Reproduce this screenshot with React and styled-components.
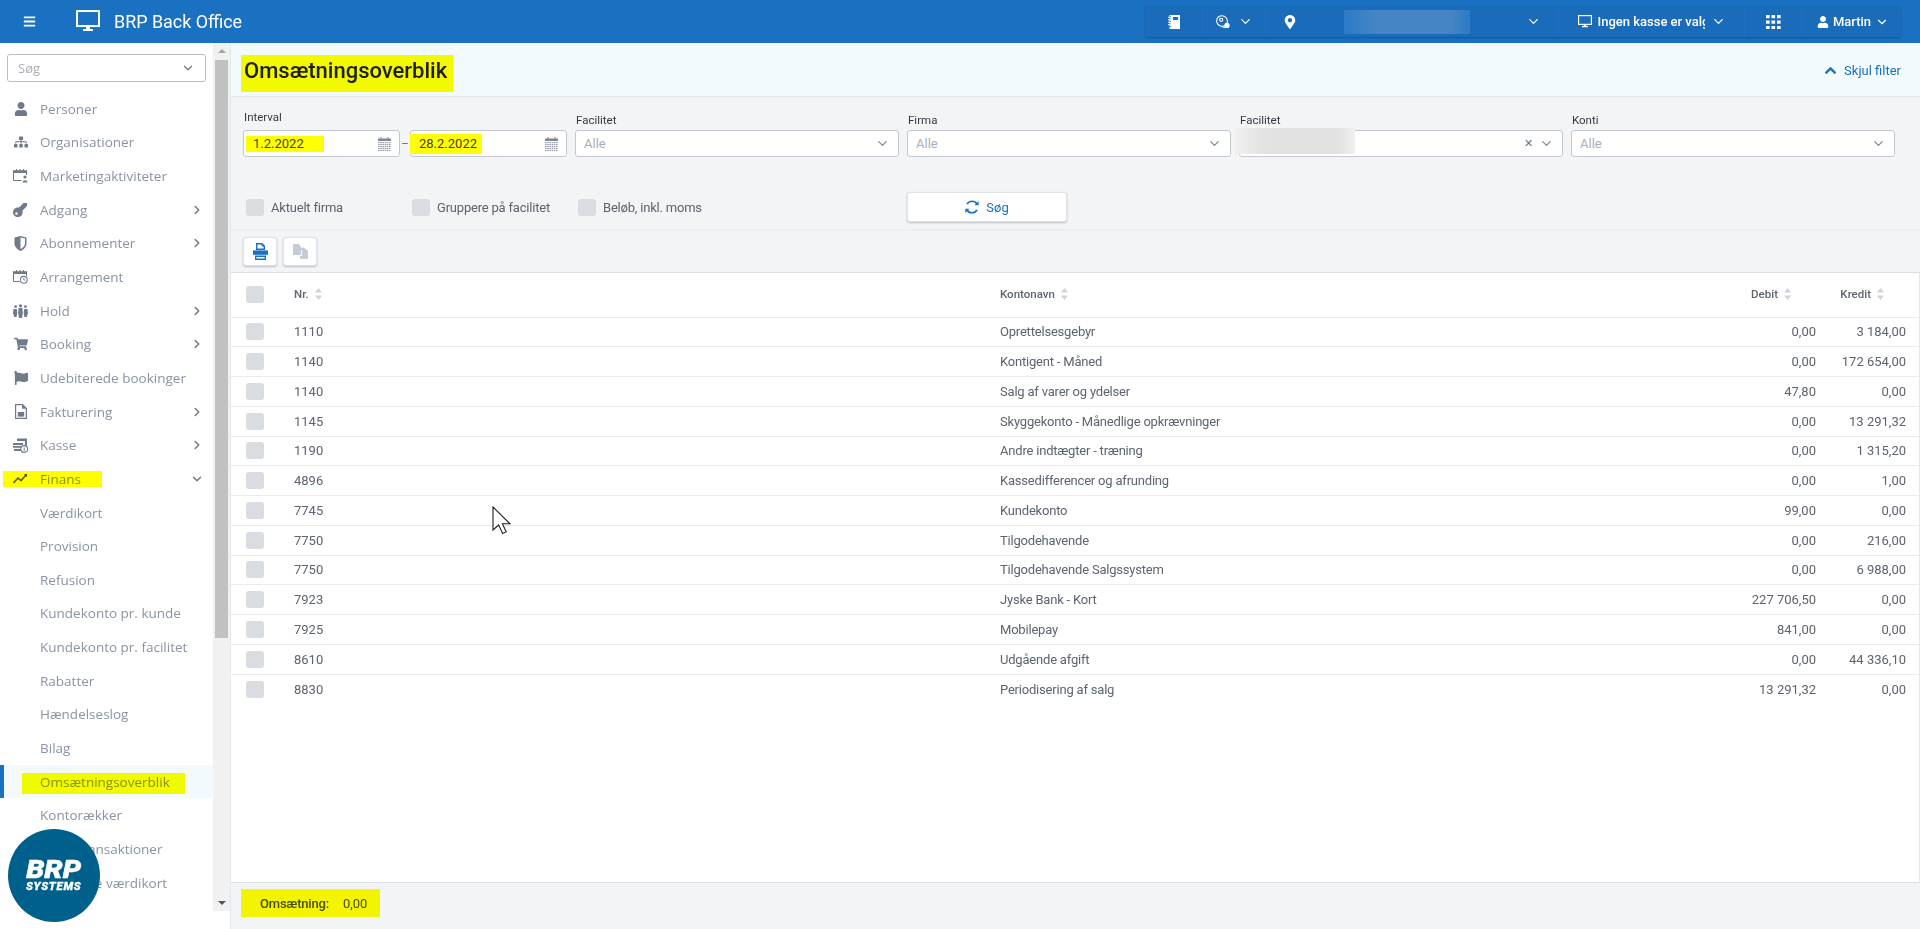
import React from "react";
import styled, { createGlobalStyle } from "styled-components";
import {
  FaUser,
  FaSitemap,
  FaKey,
  FaShoppingCart,
  FaFlag,
  FaMapMarkerAlt,
  FaBars,
} from "react-icons/fa";
import { FiChevronDown, FiChevronRight, FiChevronUp } from "react-icons/fi";

const GlobalStyle = createGlobalStyle`
  html, body {
    margin: 0;
    padding: 0;
    background: #fff;
    overflow: hidden;
  }
  * { box-sizing: border-box; }
  body {
    font-family: Roboto, "Liberation Sans", sans-serif;
    color: #5c6470;
  }
`;

/* drawn icons, the packages have nothing close to these */
const Monitor = ({ size = 24, color = "#fff" }) => (
  <svg width={size} height={size * 0.92} viewBox="0 0 24 22" fill="none">
    <rect x="1" y="1" width="22" height="15" stroke={color} strokeWidth="2" />
    <path d="M10 17h4v2h3v2H7v-2h3z" fill={color} />
  </svg>
);

const Notebook = () => (
  <svg width="12" height="14" viewBox="0 0 12 14" fill="#fff">
    <path d="M1.5 0H12v14H1.5z" />
    <path d="M0 1.5h3M0 4h3M0 6.5h3M0 9h3M0 11.5h3" stroke="#1a70c1" strokeWidth="0.8" />
    <path d="M0 2.2h2.4M0 4.7h2.4M0 7.2h2.4M0 9.7h2.4" stroke="#fff" strokeWidth="1" />
    <rect x="5" y="2" width="5" height="3" fill="#1a70c1" />
  </svg>
);

const Gears = () => (
  <svg width="15" height="14" viewBox="0 0 15 14" fill="none" stroke="#fff">
    <ellipse cx="6" cy="6" rx="5.4" ry="5.2" strokeWidth="1" transform="rotate(25 6 6)" />
    <circle cx="5.2" cy="4.8" r="1.6" strokeWidth="1.1" />
    <circle cx="11" cy="10.4" r="2.6" fill="#fff" stroke="none" />
    <path d="M10 12.6a6 6 0 0 1-4-1" strokeWidth="1" />
  </svg>
);

const Apps = () => (
  <svg width="15" height="14" viewBox="0 0 15 14" fill="#fff">
    {[0, 5.5, 11].map((y) =>
      [0, 5.5, 11].map((x) => <rect key={`${x}-${y}`} x={x} y={y} width="3.6" height="3.2" />)
    )}
  </svg>
);

const Shield = () => (
  <svg width="13" height="15" viewBox="0 0 13 15">
    <path d="M0.5 1.5 6.5 0l6 1.5v6c0 3.5-3 6-6 7.5-3-1.5-6-4-6-7.5z" fill="#6f7a8a" />
    <path d="M6.5 1.5 11 2.6v5c0 2.5-2.3 4.4-4.5 5.7z" fill="#fff" />
  </svg>
);

const CalPerson = () => (
  <svg width="15" height="14" viewBox="0 0 15 14" fill="none">
    <path d="M.5 2.5h13M.5 2.5v9h8M13.5 2.5V6" stroke="#6f7a8a" />
    <path d="M0 1.2h14V4H0z" fill="#6f7a8a" />
    <path d="M3 0h1v2H3zM6.5 0h1v2h-1zM10 0h1v2h-1z" fill="#6f7a8a" />
    <circle cx="12" cy="8" r="1.6" fill="#6f7a8a" />
    <path d="M9.5 13.6c0-3 5-3 5 0z" fill="#6f7a8a" />
  </svg>
);

const CalClock = () => (
  <svg width="15" height="14" viewBox="0 0 15 14" fill="none">
    <path d="M.5 2.5v9h6M13.5 2.5V6" stroke="#6f7a8a" />
    <path d="M0 1.2h14V4H0z" fill="#6f7a8a" />
    <path d="M3 0h1v2H3zM6.5 0h1v2h-1zM10 0h1v2h-1z" fill="#6f7a8a" />
    <circle cx="10.8" cy="9.8" r="3.4" fill="#fff" stroke="#6f7a8a" strokeWidth="1.1" />
    <path d="M10.8 8v2h1.6" stroke="#6f7a8a" strokeWidth=".9" />
  </svg>
);

const People = () => (
  <svg width="15" height="14" viewBox="0 0 15 14" fill="#6f7a8a">
    <circle cx="7.5" cy="1.8" r="1.6" />
    <path d="M5.6 4h3.8l.4 5-.8 5H6l-.8-5z" />
    <circle cx="2.6" cy="2.6" r="1.4" />
    <path d="M.6 5h3.2l.5 4-.7 4H1.2L0 9z" />
    <circle cx="12.4" cy="2.6" r="1.4" />
    <path d="M11.2 5h3.2L15 9l-1.2 4h-2.4l-.7-4z" />
  </svg>
);

const Invoice = () => (
  <svg width="12" height="15" viewBox="0 0 12 15" fill="none">
    <path d="M.6.6h7l3.8 3.8v10H.6z" stroke="#6f7a8a" strokeWidth="1.2" />
    <path d="M7 .6v4.2h4.4" fill="#6f7a8a" />
    <path d="M2.8 8h6.4v4.6H2.8z" fill="#6f7a8a" />
  </svg>
);

const CashRegister = () => (
  <svg width="15" height="15" viewBox="0 0 15 15" fill="#6f7a8a">
    <path d="M4 .5h10V8h-2V3H4z" />
    <path d="M0 5h10v2H0zM0 8h9v1.8H0zM1 11h7v2H1z" />
    <circle cx="11.2" cy="11" r="3.4" fill="#fff" stroke="#6f7a8a" strokeWidth="1.2" />
    <path d="M10.7 9.2h1v3.8h-1z" />
  </svg>
);

const Trend = () => (
  <svg width="15" height="11" viewBox="0 0 15 11" fill="none" stroke="#5a5a20" strokeWidth="1.6">
    <path d="M.5 10 5 5l3 2.6L13 2" />
    <path d="M10.8 1H14v3.2z" fill="#5a5a20" stroke="none" />
  </svg>
);

const Printer = () => (
  <svg width="15" height="17" viewBox="0 0 15 17" fill="#1a70c1">
    <path d="M3 0h6.2L12 2.8V7H3zM4.4 1.4V5.6h6.2V3.4H8.6V1.4z" fillRule="evenodd" />
    <path d="M0 7.4h15v4.4H0z" />
    <path d="M2 12.6h11V17H2zM3.4 14v1.6h8.2V14z" fillRule="evenodd" />
  </svg>
);

const Copies = () => (
  <svg width="15" height="15" viewBox="0 0 15 15" fill="#c6ccd4">
    <path d="M0 0h5.5L8 2.5V11H0z" />
    <path d="M5.5 4H9v-.5h2L15 7v8H7v-3h2V6H5.5z" />
  </svg>
);

const Calendar = () => (
  <svg width="13" height="14" viewBox="0 0 13 14" fill="#7e8794">
    <path d="M0 1.5h13V4H0zM2.5 0h1v2h-1zM9.5 0h1v2h-1z" />
    {[5, 7, 9, 11, 13].map((y) =>
      [0, 2.2, 4.4, 6.6, 8.8, 11].map((x) => (
        <rect key={`${x}-${y}`} x={x} y={y} width="1.6" height="1.2" opacity=".8" />
      ))
    )}
  </svg>
);

const Sync = () => (
  <svg width="14" height="14" viewBox="0 0 14 14" fill="none" stroke="#1a70c1" strokeWidth="1.7">
    <path d="M2 4.2A5.8 5.8 0 0 1 12 4" />
    <path d="M12 9.8A5.8 5.8 0 0 1 2 10" />
    <path d="M13.6 1v4.2H9.6z" fill="#1a70c1" stroke="none" />
    <path d="M.4 13V8.8h4z" fill="#1a70c1" stroke="none" />
  </svg>
);

const Sort = () => (
  <svg width="7" height="12" viewBox="0 0 7 12" fill="#cfd4da">
    <path d="M3.5 0 7 4.6H0zM0 7.4h7L3.5 12z" />
  </svg>
);

const Cursor = () => (
  <svg width="20" height="28" viewBox="0 0 20 28">
    <path
      d="M1 1v23l5.6-5 4 8.4 3.6-1.6-3.8-8H18z"
      fill="#fff"
      stroke="#1d2024"
      strokeWidth="1.1"
    />
  </svg>
);

const Page = styled.div`
  display: flex;
  flex-direction: column;
  height: 100vh;
  position: relative;
  overflow: hidden;
`;

const TopBar = styled.header`
  flex: 0 0 43px;
  display: flex;
  align-items: center;
  background: #1a70c1;
  color: #fff;
  padding: 0 19px 0 23px;
`;

const Burger = styled.span`
  display: flex;
  font-size: 13px;
  width: 53px;
`;

const Brand = styled.span`
  display: flex;
  align-items: center;
  gap: 14px;
  font-size: 17.9px;
`;

const TopGroup = styled.div`
  display: flex;
  gap: 1px;
  margin-left: auto;
  height: 31px;
  border-radius: 3px;
  box-shadow: 0 1px 2px rgba(0, 40, 90, 0.35);
`;

const TopItem = styled.div`
  display: flex;
  align-items: center;
  justify-content: ${(p) => p.$justify || "center"};
  gap: ${(p) => p.$gap || 5}px;
  width: ${(p) => p.$w}px;
  padding: 0 ${(p) => p.$pr || 0}px 0 ${(p) => p.$pl || 0}px;
  background: #1a6cba;
  font-size: 13px;
  font-weight: 500;
  svg { flex: none; }
`;

const TopSpacer = styled.span`
  flex: 1;
`;

const ClippedText = styled.span`
  width: 107px;
  overflow: hidden;
  white-space: nowrap;
`;

const Body = styled.div`
  flex: 1;
  display: flex;
  min-height: 0;
`;

const Side = styled.aside`
  flex: 0 0 230px;
  height: 868px;
  display: flex;
`;

const SideInner = styled.div`
  width: 213px;
  overflow: hidden;
  font-family: "Open Sans", Roboto, sans-serif;
`;

const ScrollTrack = styled.div`
  width: 17px;
  background: #f1f1f1;
  display: flex;
  flex-direction: column;
  align-items: center;
  padding: 6px 2px;
`;

const ScrollThumb = styled.div`
  width: 13px;
  height: 578px;
  margin: 7px 0 auto;
  background: #c1c1c1;
`;

const ScrollArrow = styled.span`
  width: 0;
  height: 0;
  border-left: 4px solid transparent;
  border-right: 4px solid transparent;
  ${(p) => (p.$up ? "border-bottom: 4px solid #a6a6a6;" : "border-top: 4px solid #555;")}
`;

const SideSearch = styled.div`
  display: flex;
  align-items: center;
  justify-content: space-between;
  margin: 11px 7px 10px;
  height: 28px;
  padding: 0 10px;
  border: 1px solid #b9bec6;
  border-radius: 3px;
  color: #a9aeb6;
  font-size: 13px;
`;

const NavItem = styled.div`
  position: relative;
  display: flex;
  align-items: center;
  height: 33.65px;
  padding-left: 40px;
  font-size: 13.5px;
  white-space: nowrap;
  color: #8a93a3;
  ${(p) =>
    p.$active &&
    `
    background: #f2fafe;
    box-shadow: inset 4px 0 0 #1a70c1;
  `}
`;

const NavIcon = styled.span`
  position: absolute;
  left: 13px;
  width: 15px;
  display: flex;
  justify-content: center;
  color: #6f7a8a;
  font-size: 14px;
  transform: ${(p) => (p.$flip ? "rotate(180deg)" : "none")};
`;

const NavChevron = styled.span`
  position: absolute;
  right: 9px;
  display: flex;
  color: #6f7a8a;
  font-size: 14px;
  svg { stroke-width: 2.6; }
`;

const NavMark = styled.span`
  position: absolute;
  left: ${(p) => p.$left}px;
  width: ${(p) => p.$width}px;
  top: ${(p) => p.$top}px;
  bottom: ${(p) => p.$bottom}px;
  background: #ffff00;
  mix-blend-mode: multiply;
`;

const Main = styled.main`
  flex: 1;
  min-width: 0;
  display: flex;
  flex-direction: column;
  border-left: 1px solid #e4e7eb;
  background: #f3f4f6;
`;

const PageHead = styled.div`
  flex: 0 0 54px;
  display: flex;
  align-items: flex-start;
  justify-content: space-between;
  padding: 12px 19px 0 10px;
  background: #f2fafe;
  border-bottom: 1px solid #dfe5ec;
`;

const Title = styled.h1`
  margin: 0;
  height: 37px;
  width: 212px;
  line-height: 32px;
  padding-left: 3px;
  font-size: 22px;
  font-weight: 500;
  white-space: nowrap;
  color: #1f1f10;
  background: #f3fa00;
`;

const HideFilter = styled.span`
  display: flex;
  align-items: center;
  gap: 5px;
  height: 30px;
  font-size: 13px;
  color: #1a70c1;
  svg { stroke-width: 3.4; font-size: 17px; }
`;

const FilterBox = styled.section`
  flex: 0 0 134px;
  padding: 0 25px 0 12px;
  border-bottom: 2px solid #eceef1;
`;

const FilterGrid = styled.div`
  display: grid;
  grid-template-columns: repeat(5, 1fr);
  gap: 8px;
  align-items: end;
  height: 60px;
`;

const Field = styled.div`
  display: flex;
  flex-direction: column;
`;

const FieldLabel = styled.label`
  font-size: 11.5px;
  color: #333a44;
  padding-left: 1px;
  margin-bottom: ${(p) => p.$gap || 3}px;
`;

const IntervalRow = styled.div`
  display: grid;
  grid-template-columns: 157px 1fr 157px;
  align-items: center;
  color: #777;
  font-size: 12px;
  text-align: center;
`;

const Input = styled.div`
  position: relative;
  display: flex;
  align-items: center;
  justify-content: space-between;
  height: 27px;
  padding: 0 8px;
  background: #fff;
  border: 1px solid #c3c8cf;
  border-radius: 3px;
  font-size: 13px;
  color: #a9aeb6;
  svg { flex: none; }
`;

const SelectIcons = styled.span`
  display: flex;
  align-items: center;
  gap: 6px;
  margin-left: auto;
  color: #7e8794;
  font-size: 15px;
`;

const ClearMark = styled.span`
  font-size: 11px;
  color: #6c7480;
`;

const DateMark = styled.span`
  display: flex;
  align-items: center;
  width: ${(p) => p.$w}px;
  height: ${(p) => p.$h}px;
  margin-left: ${(p) => p.$ml}px;
  padding-left: ${(p) => p.$pl}px;
  background: #ffff00;
  color: #45451a;
  text-align: left;
`;

const FilterActions = styled.div`
  display: grid;
  grid-template-columns: repeat(5, 1fr);
  gap: 8px;
  align-items: center;
  margin-top: 35px;
`;

const Checks = styled.div`
  grid-column: 1 / 3;
  display: flex;
  padding-left: 3px;
`;

const CheckLabel = styled.label`
  width: 166px;
  display: flex;
  align-items: center;
  gap: 7px;
  font-size: 13px;
  letter-spacing: -0.2px;
  color: #5c6470;
`;

const Box = styled.span`
  flex: none;
  display: block;
  width: 18px;
  height: 17px;
  background: #d9dce1;
  border-radius: 3px;
`;

const SearchButton = styled.button`
  grid-column: 3;
  width: 160px;
  height: 30px;
  display: flex;
  align-items: center;
  justify-content: center;
  gap: 7px;
  padding: 0;
  background: #fff;
  border: 1px solid #dfe2e6;
  border-radius: 3px;
  box-shadow: 0 1px 2px rgba(60, 70, 90, 0.3);
  color: #1a70c1;
  font-family: Roboto, sans-serif;
  font-size: 13px;
`;

const Toolbar = styled.div`
  flex: 0 0 42px;
  display: flex;
  gap: 6px;
  padding: 6px 12px;
  border-bottom: 1px solid #dde0e5;
`;

const ToolButton = styled.span`
  width: 34px;
  height: 29px;
  display: flex;
  align-items: center;
  justify-content: center;
  background: #fff;
  border: 1px solid #dfe2e6;
  border-radius: 3px;
  box-shadow: 0 1px 2px rgba(60, 70, 90, 0.3);
`;

const TableWrap = styled.div`
  flex: 1;
  background: #fff;
  border-right: 1px solid #e4e7eb;
`;

const Row = styled.div`
  display: grid;
  grid-template-columns: 63px 706px 1fr 100px 90px;
  align-items: center;
  height: ${(p) => (p.$head ? "44.5px" : "29.75px")};
  padding-right: 13px;
  font-size: ${(p) => (p.$head ? "11.5px" : "13px")};
  font-weight: ${(p) => (p.$head ? 500 : 400)};
  color: #5c6470;
  border-bottom: ${(p) => (p.$last ? "0" : "1px solid #e9ebef")};
`;

const CheckCell = styled.span`
  padding-left: 15px;
`;

const NameCell = styled.span`
  letter-spacing: -0.2px;
`;

const NumCell = styled.span`
  text-align: right;
`;

const HeadCell = styled.span`
  display: flex;
  align-items: center;
  gap: 6px;
  justify-content: ${(p) => (p.$pr ? "flex-end" : "flex-start")};
  padding-right: ${(p) => p.$pr || 0}px;
  margin-top: -1px;
`;

const Footer = styled.footer`
  flex: 0 0 47px;
  padding: 6px 10px;
  border-top: 1px solid #dde0e5;
`;

const FooterMark = styled.div`
  display: inline-flex;
  align-items: center;
  gap: 14px;
  width: 139px;
  height: 28px;
  padding-left: 19px;
  background: #f3f400;
  font-size: 13px;
  color: #4c4c10;
`;

const FooterLabel = styled.span`
  font-weight: 500;
  letter-spacing: -0.2px;
`;

const Logo = styled.div`
  position: absolute;
  left: 8px;
  top: 829px;
  width: 92px;
  height: 93px;
  border-radius: 50%;
  background: #00608c;
  color: #fff;
  display: flex;
  flex-direction: column;
  align-items: center;
  justify-content: center;
  font-style: italic;
  font-weight: 900;
  font-family: Roboto, "Liberation Sans", sans-serif;
`;

const LogoBig = styled.span`
  font-size: 25px;
  line-height: 22px;
  transform: scaleX(1.16);
  -webkit-text-stroke: 0.5px #fff;
`;

const LogoSmall = styled.span`
  font-size: 10.5px;
  line-height: 11px;
  letter-spacing: 0.7px;
  transform: scaleX(1.08);
  -webkit-text-stroke: 0.3px #fff;
`;

const Blur = styled.div`
  position: absolute;
  left: ${(p) => p.$x}px;
  top: ${(p) => p.$y}px;
  width: ${(p) => p.$w}px;
  height: ${(p) => p.$h}px;
  background: linear-gradient(90deg, ${(p) => p.$edge}, ${(p) => p.$mid} 25%, ${(p) => p.$mid} 85%, ${(p) => p.$edge});
`;

const CursorSpot = styled.div`
  position: absolute;
  left: 492px;
  top: 506px;
  display: flex;
`;

const navItems = [
  { label: "Personer", icon: <FaUser /> },
  { label: "Organisationer", icon: <FaSitemap /> },
  { label: "Marketingaktiviteter", icon: <CalPerson /> },
  { label: "Adgang", icon: <FaKey />, flip: true, more: true },
  { label: "Abonnementer", icon: <Shield />, more: true },
  { label: "Arrangement", icon: <CalClock /> },
  { label: "Hold", icon: <People />, more: true },
  { label: "Booking", icon: <FaShoppingCart />, more: true },
  { label: "Udebiterede bookinger", icon: <FaFlag /> },
  { label: "Fakturering", icon: <Invoice />, more: true },
  { label: "Kasse", icon: <CashRegister />, more: true },
  { label: "Finans", icon: <Trend />, open: true, mark: { left: 3, width: 99, top: 9, bottom: 9 } },
  { label: "Værdikort" },
  { label: "Provision" },
  { label: "Refusion" },
  { label: "Kundekonto pr. kunde" },
  { label: "Kundekonto pr. facilitet" },
  { label: "Rabatter" },
  { label: "Hændelseslog" },
  { label: "Bilag" },
  { label: "Omsætningsoverblik", active: true, mark: { left: 22, width: 163, top: 8, bottom: 4 } },
  { label: "Kontorækker" },
  { label: "Kontotransaktioner" },
  { label: "Forbrugte værdikort" },
];

const accounts = [
  ["1110", "Oprettelsesgebyr", "0,00", "3 184,00"],
  ["1140", "Kontigent - Måned", "0,00", "172 654,00"],
  ["1140", "Salg af varer og ydelser", "47,80", "0,00"],
  ["1145", "Skyggekonto - Månedlige opkrævninger", "0,00", "13 291,32"],
  ["1190", "Andre indtægter - træning", "0,00", "1 315,20"],
  ["4896", "Kassedifferencer og afrunding", "0,00", "1,00"],
  ["7745", "Kundekonto", "99,00", "0,00"],
  ["7750", "Tilgodehavende", "0,00", "216,00"],
  ["7750", "Tilgodehavende Salgssystem", "0,00", "6 988,00"],
  ["7923", "Jyske Bank - Kort", "227 706,50", "0,00"],
  ["7925", "Mobilepay", "841,00", "0,00"],
  ["8610", "Udgående afgift", "0,00", "44 336,10"],
  ["8830", "Periodisering af salg", "13 291,32", "0,00"],
];

const SelectField = ({ label, value = "Alle", clear }) => (
  <Field>
    <FieldLabel>{label}</FieldLabel>
    <Input>
      {value}
      <SelectIcons>
        {clear && <ClearMark>✕</ClearMark>}
        <FiChevronDown />
      </SelectIcons>
    </Input>
  </Field>
);

const App = () => {
  return (
    <Page>
      <GlobalStyle />
      <TopBar>
        <Burger>
          <FaBars />
        </Burger>
        <Brand>
          <Monitor />
          BRP Back Office
        </Brand>
        <TopGroup>
          <TopItem $w={57}>
            <Notebook />
          </TopItem>
          <TopItem $w={62} $gap={7}>
            <Gears />
            <FiChevronDown size={15} />
          </TopItem>
          <TopItem $w={292} $justify="flex-start" $pl={17} $pr={17}>
            <FaMapMarkerAlt size={14} />
            <TopSpacer />
            <FiChevronDown size={15} />
          </TopItem>
          <TopItem $w={185} $gap={6}>
            <Monitor size={14} />
            <ClippedText>Ingen kasse er valgt</ClippedText>
            <FiChevronDown size={15} />
          </TopItem>
          <TopItem $w={56}>
            <Apps />
          </TopItem>
          <TopItem $w={99} $gap={4} $pl={3}>
            <FaUser size={12} />
            Martin
            <FiChevronDown size={14} />
          </TopItem>
        </TopGroup>
      </TopBar>

      <Body>
        <Side>
          <SideInner>
            <SideSearch>
              Søg
              <FiChevronDown size={14} color="#777" />
            </SideSearch>
            {navItems.map((item) => (
              <NavItem key={item.label} $active={item.active}>
                {item.icon && <NavIcon $flip={item.flip}>{item.icon}</NavIcon>}
                {item.label}
                {item.more && (
                  <NavChevron>
                    <FiChevronRight />
                  </NavChevron>
                )}
                {item.open && (
                  <NavChevron>
                    <FiChevronDown />
                  </NavChevron>
                )}
                {item.mark && (
                  <NavMark
                    $left={item.mark.left}
                    $width={item.mark.width}
                    $top={item.mark.top}
                    $bottom={item.mark.bottom}
                  />
                )}
              </NavItem>
            ))}
          </SideInner>
          <ScrollTrack>
            <ScrollArrow $up />
            <ScrollThumb />
            <ScrollArrow />
          </ScrollTrack>
        </Side>

        <Main>
          <PageHead>
            <Title>Omsætningsoverblik</Title>
            <HideFilter>
              <FiChevronUp />
              Skjul filter
            </HideFilter>
          </PageHead>

          <FilterBox>
            <FilterGrid>
              <Field>
                <FieldLabel $gap={6}>Interval</FieldLabel>
                <IntervalRow>
                  <Input>
                    <DateMark $w={78} $h={16} $ml={-6} $pl={7}>1.2.2022</DateMark>
                    <Calendar />
                  </Input>
                  –
                  <Input>
                    <DateMark $w={72} $h={20} $ml={-9} $pl={9}>28.2.2022</DateMark>
                    <Calendar />
                  </Input>
                </IntervalRow>
              </Field>
              <SelectField label="Facilitet" />
              <SelectField label="Firma" />
              <SelectField label="Facilitet" value="" clear />
              <SelectField label="Konti" />
            </FilterGrid>
            <FilterActions>
              <Checks>
                <CheckLabel>
                  <Box />
                  Aktuelt firma
                </CheckLabel>
                <CheckLabel>
                  <Box />
                  Gruppere på facilitet
                </CheckLabel>
                <CheckLabel>
                  <Box />
                  Beløb, inkl. moms
                </CheckLabel>
              </Checks>
              <SearchButton>
                <Sync />
                Søg
              </SearchButton>
            </FilterActions>
          </FilterBox>

          <Toolbar>
            <ToolButton>
              <Printer />
            </ToolButton>
            <ToolButton>
              <Copies />
            </ToolButton>
          </Toolbar>

          <TableWrap>
            <Row $head>
              <CheckCell>
                <Box />
              </CheckCell>
              <HeadCell>
                Nr. <Sort />
              </HeadCell>
              <HeadCell>
                Kontonavn <Sort />
              </HeadCell>
              <HeadCell $pr={25}>
                Debit <Sort />
              </HeadCell>
              <HeadCell $pr={22}>
                Kredit <Sort />
              </HeadCell>
            </Row>
            {accounts.map((a, i) => (
              <Row key={i} $last={i === accounts.length - 1}>
                <CheckCell>
                  <Box />
                </CheckCell>
                <span>{a[0]}</span>
                <NameCell>{a[1]}</NameCell>
                <NumCell>{a[2]}</NumCell>
                <NumCell>{a[3]}</NumCell>
              </Row>
            ))}
          </TableWrap>

          <Footer>
            <FooterMark>
              <FooterLabel>Omsætning:</FooterLabel>
              0,00
            </FooterMark>
          </Footer>
        </Main>
      </Body>

      <Blur $x={1344} $y={10} $w={126} $h={24} $edge="#2b7bc6" $mid="#4585c5" />
      <Blur $x={1235} $y={128} $w={120} $h={26} $edge="#f0f0f0" $mid="#e2e2e2" />

      <Logo>
        <LogoBig>BRP</LogoBig>
        <LogoSmall>SYSTEMS</LogoSmall>
      </Logo>

      <CursorSpot>
        <Cursor />
      </CursorSpot>
    </Page>
  );
};

export default App;
